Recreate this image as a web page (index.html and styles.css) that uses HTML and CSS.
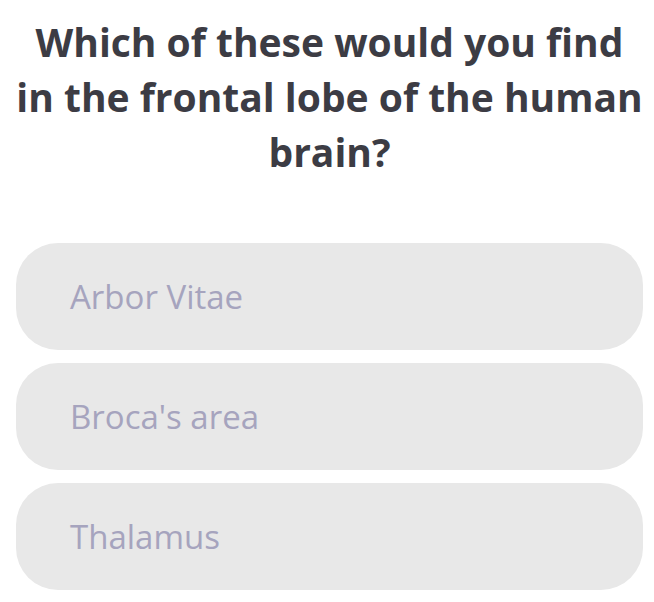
FILE: index.html
```html
<!DOCTYPE html>
<html>
<head>
<meta charset="utf-8">
<link rel="stylesheet" href="styles.css">
</head>
<body>
<div class="quiz">
  <h1 class="question">Which of these would you find<br>in the frontal lobe of the human<br>brain?</h1>
  <div class="options">
    <div class="option">Arbor Vitae</div>
    <div class="option">Broca's area</div>
    <div class="option">Thalamus</div>
  </div>
</div>
</body>
</html>
```
FILE: styles.css
```css
html, body {
  margin: 0;
  padding: 0;
  background: #ffffff;
}
.quiz {
  width: 654px;
  height: 602px;
  box-sizing: border-box;
  padding: 14px 11px 0 16px;
}
.question {
  margin: 0 -16px 0 -16px;
  font-family: "Open Sans", sans-serif;
  font-weight: 700;
  font-size: 39px;
  line-height: 55px;
  color: #3c3c44;
  text-align: center;
  white-space: nowrap;
}
.options {
  margin-top: 64px;
  display: flex;
  flex-direction: column;
  gap: 13px;
}
.option {
  flex: 0 0 107px;
  height: 107px;
  border-radius: 42px;
  background: #e8e8e8;
  display: flex;
  align-items: center;
  padding-left: 54px;
  font-family: "Open Sans", sans-serif;
  font-size: 33px;
  color: #a6a4be;
}
```
